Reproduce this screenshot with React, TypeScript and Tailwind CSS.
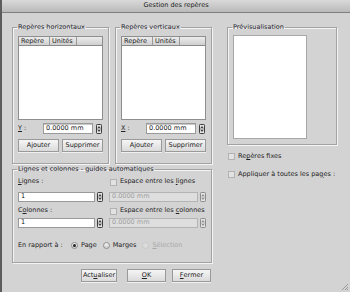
import type { ReactNode } from "react";

const font = { fontFamily: '"DejaVu Sans", "Noto Sans", sans-serif' };

function Spinner({ disabled = false }: { disabled?: boolean }) {
  const c = disabled ? "#8c8c8c" : "#3c3c3c";
  return (
    <svg width="6" height="10" viewBox="0 0 6 10" className="shrink-0">
      <rect x="0.5" y="0.5" width="5" height="9" rx="0.8" fill="#e4e4e4" stroke={c} />
      <path d="M1.5 4 L3 2 L4.5 4 Z" fill={c} />
      <path d="M1.5 6 L3 8 L4.5 6 Z" fill={c} />
      <line x1="1" y1="5" x2="5" y2="5" stroke={c} strokeWidth="0.6" />
    </svg>
  );
}

function Group({ title, className, children }: { title: string; className: string; children: ReactNode }) {
  return (
    <fieldset className={`rounded-none border border-[#a2a2a2] shadow-[inset_1px_1px_0_#f4f4f4,1px_1px_0_#f4f4f4] ${className}`}>
      <legend className="ml-[4px] px-[1px] leading-[8px] text-[#1c1c2c]">{title}</legend>
      {children}
    </fieldset>
  );
}

function Btn({ children, className = "" }: { children: ReactNode; className?: string }) {
  return (
    <div
      className={`flex h-[13px] items-center justify-center border border-[#9a9a9a] bg-gradient-to-b from-[#f6f6f6] to-[#dadada] text-[#222] shadow-[0_1px_0_#f0f0f0] ${className}`}
    >
      {children}
    </div>
  );
}

function Check({ label }: { label: ReactNode }) {
  return (
    <div className="flex items-center gap-[3px]">
      <span className="h-[7px] w-[7px] border border-[#b2b2b2] bg-[#e2e2e2]" />
      <span>{label}</span>
    </div>
  );
}

function GuideList({ axis }: { axis: string }) {
  return (
    <div className="flex flex-col px-[5px] pt-[5px]">
      <div className="h-[84px] border border-[#8e8e8e] bg-white">
        <div className="flex h-[9px] border-b border-[#8a8a8a] bg-gradient-to-b from-[#ececec] to-[#cfcfcf] leading-[8px]">
          <span className="w-[31px] border-r border-[#9a9a9a] pl-[2px]">Repère</span>
          <span className="w-[27px] border-r border-[#9a9a9a] pl-[2px]">Unités</span>
        </div>
      </div>
      <div className="mt-[3px] flex h-[11px] items-center">
        <span className="w-[25px]">
          <span className="underline">{axis}</span> :
        </span>
        <div className="flex h-[11px] w-[50px] items-center border border-[#9a9a9a] bg-white pl-[2px] shadow-[inset_0_1px_0_#c8c8c8]">
          0.0000 mm
        </div>
        <div className="ml-[3px]">
          <Spinner />
        </div>
      </div>
      <div className="mt-[5px] flex gap-[3px]">
        <Btn className="w-[41px]">
          A<span className="underline">j</span>outer
        </Btn>
        <Btn className="w-[41px]">Supprimer</Btn>
      </div>
    </div>
  );
}

function NumField({ value, disabled = false, width }: { value: string; disabled?: boolean; width: string }) {
  return (
    <div className="flex items-center">
      <div
        className={`flex h-[10px] items-center border pl-[2px] ${width} ${
          disabled ? "border-[#b4b4b4] bg-[#dedede] text-[#a0a0a0]" : "border-[#9a9a9a] bg-white text-[#111]"
        }`}
      >
        {value}
      </div>
      <div className="ml-[2px]">
        <Spinner disabled={disabled} />
      </div>
    </div>
  );
}

function Radio({ label, on = false, dim = false }: { label: ReactNode; on?: boolean; dim?: boolean }) {
  return (
    <div className={`flex items-center gap-[3px] ${dim ? "text-[#a8a8a8]" : "text-[#222]"}`}>
      <span
        className={`flex h-[7px] w-[7px] items-center justify-center rounded-full border ${
          dim ? "border-[#c8c8c8] bg-[#dcdcdc]" : "border-[#8e8e8e] bg-gradient-to-b from-[#f4f4f4] to-[#cfcfcf]"
        }`}
      >
        {on && <span className="h-[3px] w-[3px] rounded-full bg-[#222]" />}
      </span>
      <span>{label}</span>
    </div>
  );
}

export default function App() {
  return (
    <div
      style={font}
      className="relative h-[292px] w-[350px] overflow-hidden border-l-2 border-[#5c5c5c] bg-[#d3d3d3] text-[6.5px] text-[#222]"
    >
      <div className="flex h-[13px] items-center justify-center border-b border-[#808080] bg-gradient-to-b from-[#d9d9d9] to-[#bababa] text-[#1a1a1a]">
        Gestion des repères
      </div>

      <div className="flex pl-[10px] pt-[10px]">
        <div className="flex w-[200px] flex-col">
          <div className="flex gap-[6px]">
            <Group title="Repères horizontaux" className="h-[141px] w-[97px]">
              <GuideList axis="Y" />
            </Group>
            <Group title="Repères verticaux" className="h-[141px] w-[97px]">
              <GuideList axis="X" />
            </Group>
          </div>

          <Group title="Lignes et colonnes - guides automatiques" className="mt-[1px] h-[98px] w-[200px]">
            <div className="flex flex-col px-[5px] pt-[4px]">
              <div className="flex h-[10px] items-center">
                <span className="w-[92px]">
                  <span className="underline">L</span>ignes :
                </span>
                <Check
                  label={
                    <>
                      Espace entre les <span className="underline">l</span>ignes
                    </>
                  }
                />
              </div>
              <div className="mt-[5px] flex gap-[6px]">
                <NumField value="1" width="w-[77px]" />
                <NumField value="0.0000 mm" disabled width="w-[89px]" />
              </div>
              <div className="mt-[4px] flex h-[10px] items-center">
                <span className="w-[92px]">
                  C<span className="underline">o</span>lonnes :
                </span>
                <Check
                  label={
                    <>
                      Espace entre les <span className="underline">c</span>olonnes
                    </>
                  }
                />
              </div>
              <div className="mt-[2px] flex gap-[6px]">
                <NumField value="1" width="w-[77px]" />
                <NumField value="0.0000 mm" disabled width="w-[89px]" />
              </div>
              <div className="mt-[13px] flex items-center">
                <span className="w-[53px]">En rapport à :</span>
                <div className="flex items-center gap-[6px]">
                  <Radio label="Page" on />
                  <Radio label="Marges" />
                  <Radio
                    dim
                    label={
                      <>
                        <span className="underline">S</span>élection
                      </>
                    }
                  />
                </div>
              </div>
            </div>
          </Group>

          <div className="mt-[6px] flex pl-[69px]">
            <Btn className="w-[36px]">
              Act<span className="underline">u</span>aliser
            </Btn>
            <Btn className="ml-[10px] w-[39px]">
              <span className="underline">O</span>K
            </Btn>
            <Btn className="ml-[6px] w-[39px]">
              <span className="underline">F</span>ermer
            </Btn>
          </div>
        </div>

        <div className="ml-[15px] flex w-[110px] flex-col">
          <Group title="Prévisualisation" className="h-[122px] w-[110px]">
            <div className="px-[5px] pt-[4px]">
              <div className="h-[104px] w-[74px] border border-[#a8a8a8] bg-white" />
            </div>
          </Group>
          <div className="mt-[7px] flex flex-col gap-[8px] pl-[1px]">
            <Check
              label={
                <>
                  Re<span className="underline">p</span>ères fixes
                </>
              }
            />
            <Check
              label={
                <>
                  Appliquer à toutes les pa<span className="underline">g</span>es :
                </>
              }
            />
          </div>
        </div>
      </div>

      <svg width="8" height="8" viewBox="0 0 8 8" className="absolute bottom-[1px] right-[1px]">
        <path d="M7 1 L1 7 M7 4 L4 7 M7 6 L6 7" stroke="#8a8a8a" strokeWidth="0.8" />
      </svg>
    </div>
  );
}
